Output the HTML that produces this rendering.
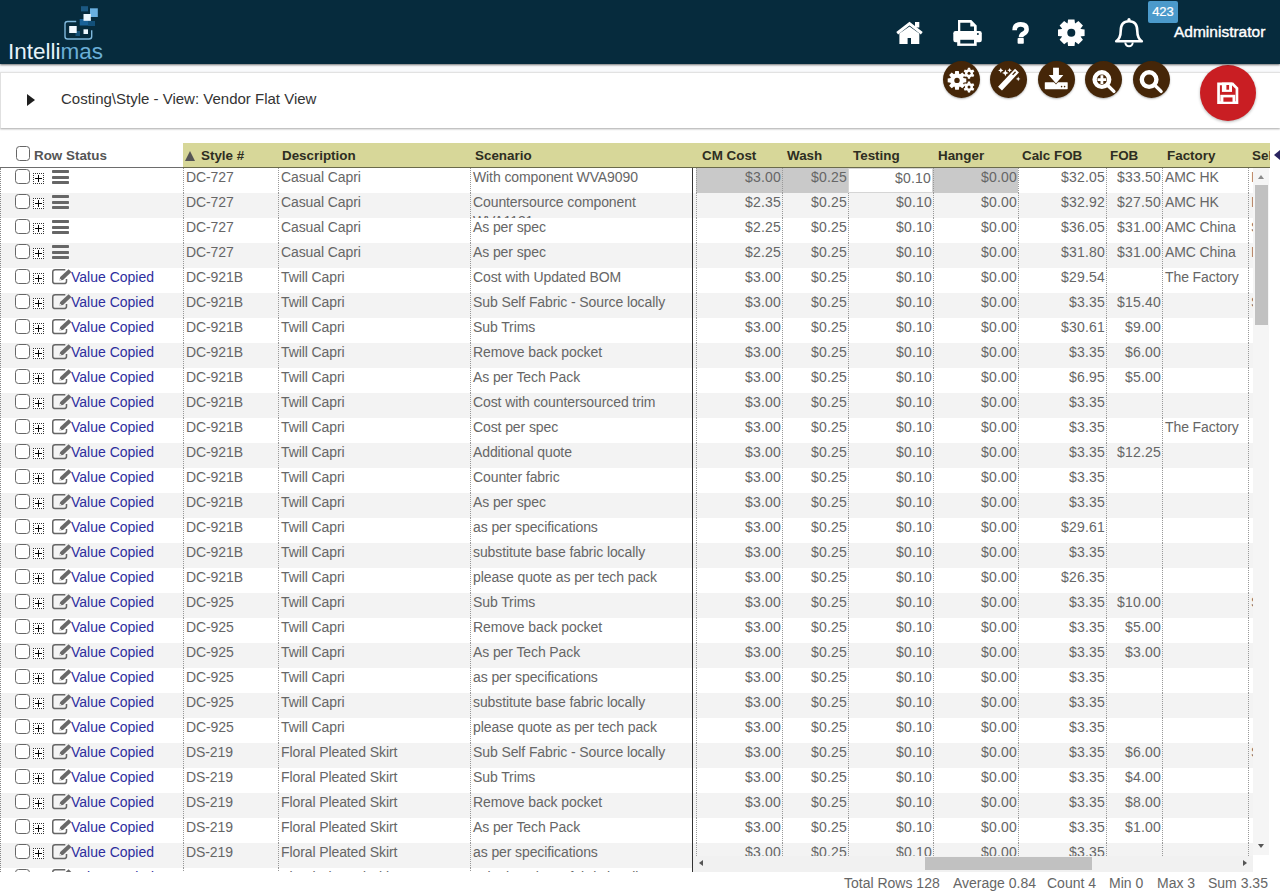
<!DOCTYPE html><html><head><meta charset="utf-8"><title>Intellimas</title><style>*{box-sizing:border-box}
html,body{margin:0;padding:0}
body{width:1280px;height:893px;overflow:hidden;position:relative;background:#fff;font-family:"Liberation Sans",sans-serif;color:#666}
#hdr{position:absolute;left:0;top:0;width:1280px;height:64px;background:#062b3d;box-shadow:0 1px 2px rgba(0,0,0,.55);z-index:1}
#gap{position:absolute;left:0;top:64px;width:1280px;height:8px;background:#f9fafc}
#panel{position:absolute;left:0;top:72px;width:1280px;height:56px;background:#fff;border-top:1px solid #e2e2e2;border-left:1px solid #e0e0e0;box-shadow:0 1px 2px rgba(0,0,0,.35)}
.crumb{position:absolute;left:61px;top:90px;font-size:15px;color:#333;line-height:18px}
.tri{position:absolute;left:27px;top:93.5px;width:0;height:0;border-left:8px solid #1e1e1e;border-top:6.8px solid transparent;border-bottom:6.8px solid transparent}
.btn{z-index:2;position:absolute;top:61px;width:37px;height:37px;border-radius:50%;background:#452608;box-shadow:0 1px 2px rgba(0,0,0,.3)}
.btn svg{position:absolute;left:0;top:0}
.save{position:absolute;left:1200px;top:65px;width:56px;height:56px;border-radius:50%;background:#c91e23;box-shadow:0 1px 3px rgba(0,0,0,.3)}
.admin{position:absolute;left:1174px;top:23px;font-size:15.5px;color:#fff;line-height:18px;-webkit-text-stroke:0.4px #fff}
.badge{position:absolute;left:1148px;top:1px;width:30px;height:22px;background:#4b9acb;border-radius:2px;color:#fff;font-size:13px;text-align:center;line-height:22px;-webkit-text-stroke:0.2px #fff}
#gh{position:absolute;left:0;top:143px;width:1280px;height:24px}
#gh .khaki{position:absolute;left:183px;top:0;width:1087px;height:25px;background:#d7d799;border-bottom:1px solid #6a6a4a}
#gh .hl{position:absolute;left:0;top:24px;width:183px;height:1px;background:#6d6d6d}
.hc{position:absolute;top:5px;font-size:13.4px;font-weight:bold;color:#2e2e22;line-height:16px;white-space:nowrap}
#gl{position:absolute;left:0;top:168px;width:693px;height:704px;overflow:hidden}
#gr{position:absolute;left:693px;top:168px;width:560px;height:688px;overflow:hidden}
.r{position:absolute;left:0;width:1400px;height:25px;background:#fff}
.r.alt{background:#f3f3f3}
.c{position:absolute;top:0;height:25px;padding:1px 1px 0 2px;font-size:14px;letter-spacing:-0.1px;line-height:17px;white-space:nowrap;overflow:hidden;border-left:1px dotted #999;color:#666}
.c.sc{white-space:normal;border-right:1px solid #333;padding-top:0;line-height:19px}
.c.n{text-align:right;padding-right:1px;letter-spacing:0.2px}
.c.gy{background:#c9c9c9}
.c.selc{background:#fff;border:1px solid #d5d5d5}
.cb{position:absolute;left:15px;top:1px;width:15px;height:15px;border:1.6px solid #666;border-radius:3.5px;background:#fff}
.pl{position:absolute;left:33px;top:5px;width:11px;height:11px;border:1px dotted #333;background:#fff}
.pl:before{content:"";position:absolute;left:1px;top:4px;width:7px;height:1px;background:#000}
.pl:after{content:"";position:absolute;left:4px;top:1px;width:1px;height:7px;background:#000}
.ham{position:absolute;left:52px;top:2px;width:17px;height:14px}
.ham i{display:block;height:3px;background:#666;margin-bottom:2.5px;border-radius:0.8px}
.ed{position:absolute;left:52px;top:1px;width:20px;height:16px}
.ed svg{display:block}
.vc{position:absolute;left:71px;top:1px;font-size:14px;line-height:17px;color:#2d2d9e;white-space:nowrap}
#gl .lb{position:absolute;left:0;top:0;width:1px;height:704px;border-left:1px dotted #888;z-index:5}
.vsb{position:absolute;left:1253px;top:168px;width:16px;height:687px;background:#f5f5f5}
.vthumb{position:absolute;left:2px;top:17px;width:13px;height:140px;background:#c1c1c1}
.ua{position:absolute;left:5px;top:7px;border-bottom:4px solid #8a8a8a;border-left:3.5px solid transparent;border-right:3.5px solid transparent}
.da{position:absolute;left:5px;top:676px;border-top:4px solid #555;border-left:3.5px solid transparent;border-right:3.5px solid transparent}
.la{position:absolute;left:6px;top:4px;border-right:4px solid #555;border-top:3.5px solid transparent;border-bottom:3.5px solid transparent}
.ra{position:absolute;left:550px;top:4px;border-left:4px solid #555;border-top:3.5px solid transparent;border-bottom:3.5px solid transparent}
.hsb{position:absolute;left:693px;top:856px;width:560px;height:16px;background:#f1f1f1}
.hthumb{position:absolute;left:232px;top:1px;width:167px;height:13px;background:#c1c1c1}
.foot{position:absolute;left:844px;top:875px;font-size:14px;color:#666;line-height:17px;white-space:nowrap;word-spacing:0}
</style></head><body><div id="hdr">
<svg width="110" height="64" style="position:absolute;left:0;top:0">
<rect x="81" y="6.2" width="7" height="5.2" fill="#1b5882"/>
<rect x="90" y="8.3" width="7.8" height="8.7" fill="#6ab0e0"/>
<rect x="79.7" y="19" width="11.3" height="6.5" fill="#1a6298"/>
<rect x="88" y="21" width="7" height="5" fill="#12507a"/>
<rect x="75.5" y="31" width="4.5" height="5" fill="#16527a"/>
<rect x="83.5" y="14" width="7.3" height="6.8" fill="#eef8ff"/>
<rect x="69.2" y="26" width="7.5" height="7" fill="#f4faff"/>
<rect x="83.5" y="29.3" width="4.5" height="4.7" fill="#eef8ff"/>
<path d="M76.2 21.5H67.5Q65 21.5 65 24V36.5Q65 39 67.5 39H89Q91.7 39 91.7 36.5V30.2" fill="none" stroke="#7fb8dc" stroke-width="1.4"/>
<text x="8" y="59" font-family="Liberation Sans" font-size="22.5" fill="#e6f3fa">Intelli<tspan fill="#6aaed6">mas</tspan></text>
</svg>
<svg width="400" height="64" style="position:absolute;left:880px;top:0" fill="#fff">
<!-- home -->
<path d="M17.2 33.2L29.5 23.6L41.8 33.2" fill="none" stroke="#fff" stroke-width="3"/>
<rect x="35" y="22" width="4.3" height="5.5"/>
<path d="M19.4 33.6L29.5 26.6L39.3 33.6V43.9H31V38H27.6V43.9H19.4Z"/>
<!-- print -->
<path d="M78 20H91.3L96.7 25.4V33H94V26.6H90.3V22.8H80.3V33H78Z"/>
<rect x="73.3" y="31" width="28.5" height="11.3" rx="2.2"/>
<path d="M77.2 40H96.7V45.9H77.2Z"/>
<rect x="80.3" y="39.8" width="13.7" height="3.7" fill="#062b3d"/>
<circle cx="97.9" cy="34.1" r="1" fill="#062b3d"/>
<!-- ? -->
<path d="M134.6 30.2Q134.6 24.4 140.6 24.4Q146.6 24.4 146.6 29.2Q146.6 32 143.6 33.6Q141 35 141 37.2" fill="none" stroke="#fff" stroke-width="4.6"/><rect x="137.6" y="38" width="6.2" height="5.7" rx="0.8"/>
<!-- gear -->
<g transform="translate(191.3,32.7)">
<path id="tooth" d="M-3.2 -13.3H3.2L3.9 -8H-3.9Z"/>
<use href="#tooth" transform="rotate(45)"/><use href="#tooth" transform="rotate(90)"/><use href="#tooth" transform="rotate(135)"/>
<use href="#tooth" transform="rotate(180)"/><use href="#tooth" transform="rotate(225)"/><use href="#tooth" transform="rotate(270)"/><use href="#tooth" transform="rotate(315)"/>
<circle r="10" fill="#fff"/>
<circle r="4" fill="#062b3d"/>
</g>
<!-- bell -->
<path d="M249 21.3C255.3 21.3 257.3 25.5 257.3 31C257.3 36.5 258.6 39 261.8 41.3H236.2C239.4 39 240.7 36.5 240.7 31C240.7 25.5 242.7 21.3 249 21.3Z" fill="none" stroke="#fff" stroke-width="2.6" stroke-linejoin="round"/>
<circle cx="249" cy="19.6" r="1.6"/>
<path d="M245.3 42.6A3.7 3.7 0 0 0 252.7 42.6" fill="none" stroke="#fff" stroke-width="2"/>
</svg>
<div class="badge">423</div>
<div class="admin">Administrator</div>
</div>
<div id="gap"></div>
<div id="panel"></div>
<div class="tri"></div>
<div class="crumb">Costing\Style - View: Vendor Flat View</div>
<div class="btn" style="left:943px"><svg width="37" height="37" fill="#fff">
<g transform="translate(14,19.4)"><path id="t1" d="M-1.8 -9.3H1.8L2.3 -6H-2.3Z"/><use href="#t1" transform="rotate(45)"/><use href="#t1" transform="rotate(90)"/><use href="#t1" transform="rotate(135)"/><use href="#t1" transform="rotate(180)"/><use href="#t1" transform="rotate(225)"/><use href="#t1" transform="rotate(270)"/><use href="#t1" transform="rotate(315)"/><circle r="6.8"/><circle r="2.7" fill="#452608"/></g>
<g transform="translate(26,12.3)"><path id="t2" d="M-1.1 -5.5H1.1L1.4 -3.5H-1.4Z"/><use href="#t2" transform="rotate(60)"/><use href="#t2" transform="rotate(120)"/><use href="#t2" transform="rotate(180)"/><use href="#t2" transform="rotate(240)"/><use href="#t2" transform="rotate(300)"/><circle r="4"/><circle r="1.5" fill="#452608"/></g>
<g transform="translate(26,26)"><use href="#t2"/><use href="#t2" transform="rotate(60)"/><use href="#t2" transform="rotate(120)"/><use href="#t2" transform="rotate(180)"/><use href="#t2" transform="rotate(240)"/><use href="#t2" transform="rotate(300)"/><circle r="4"/><circle r="1.5" fill="#452608"/></g>
</svg></div>
<div class="btn" style="left:990px"><svg width="37" height="37" fill="#fff">
<path d="M10 27.6L27 9.6" stroke="#fff" stroke-width="5.4"/>
<path d="M22.6 13.9L25.6 10.8" stroke="#452608" stroke-width="1.3"/>
<path d="M10.8 6.8l.8 1.8 1.8.8-1.8.8-.8 1.8-.8-1.8-1.8-.8 1.8-.8z"/>
<path d="M15.4 8.6l1 2.3 2.3 1-2.3 1-1 2.3-1-2.3-2.3-1 2.3-1z"/>
<path d="M19.6 6.9l.7 1.6 1.6.7-1.6.7-.7 1.6-.7-1.6-1.6-.7 1.6-.7z"/>
<path d="M28.2 15.6l.7 1.6 1.6.7-1.6.7-.7 1.6-.7-1.6-1.6-.7 1.6-.7z"/>
</svg></div>
<div class="btn" style="left:1038px"><svg width="37" height="37" fill="#fff">
<rect x="6.8" y="21.2" width="22.9" height="7" rx="0.6"/>
<path d="M15.1 6.8H20.9V14.1H25.3L18 22.4L10.7 14.1H15.1Z" stroke="#452608" stroke-width="1.3" stroke-linejoin="miter"/>
<path d="M15.1 6.8H20.9V14.1H25.3L18 22.4L10.7 14.1H15.1Z"/>
<circle cx="23.6" cy="25.6" r=".8" fill="#452608"/><circle cx="26.6" cy="25.6" r=".8" fill="#452608"/>
</svg></div>
<div class="btn" style="left:1085px"><svg width="37" height="37">
<circle cx="16.9" cy="18.6" r="7.3" fill="none" stroke="#fff" stroke-width="4.4"/>
<path d="M22.6 24.3L28.9 30.4" stroke="#fff" stroke-width="3.4" stroke-linecap="round"/>
<path d="M16.9 14.2V23M12.5 18.6H21.3" stroke="#fff" stroke-width="2.8"/>
</svg></div>
<div class="btn" style="left:1133px"><svg width="37" height="37">
<circle cx="16.1" cy="18.6" r="7.3" fill="none" stroke="#fff" stroke-width="4.4"/>
<path d="M21.8 24.3L28.1 30.4" stroke="#fff" stroke-width="3.4" stroke-linecap="round"/>
</svg></div>
<div class="save"><svg width="56" height="56">
<path d="M18.55 18.95H32.6L36.95 23.3V37.65H18.55Z" fill="none" stroke="#fff" stroke-width="2.7"/>
<rect x="21.9" y="17.6" width="10.1" height="9.3" fill="#fff"/>
<rect x="26.4" y="20" width="2.7" height="4.7" fill="#c91e23"/>
<rect x="20.3" y="29.8" width="14.9" height="7.7" fill="#fff"/>
<rect x="23.4" y="32.4" width="9.1" height="4.3" fill="#c91e23"/>
</svg></div>
<div id="gh">
<div class="hl"></div>
<div class="khaki"></div>
<span style="position:absolute;left:15.5px;top:3px;width:14.5px;height:14.5px;border:1.6px solid #666;border-radius:3.5px;background:#fff"></span>
<span class="hc" style="left:34px;color:#555">Row Status</span>
<span style="position:absolute;left:185px;top:8px;width:0;height:0;border-bottom:10px solid #555;border-left:5px solid transparent;border-right:5px solid transparent"></span>
<span class="hc" style="left:201px">Style #</span>
<span class="hc" style="left:282px">Description</span>
<span class="hc" style="left:475px">Scenario</span>
<span class="hc" style="left:702px">CM Cost</span>
<span class="hc" style="left:787px">Wash</span>
<span class="hc" style="left:853px">Testing</span>
<span class="hc" style="left:938px">Hanger</span>
<span class="hc" style="left:1022px">Calc FOB</span>
<span class="hc" style="left:1110px">FOB</span>
<span class="hc" style="left:1167px">Factory</span>
<span class="hc" style="left:1252px;width:18px;overflow:hidden">Sel</span>
<span style="position:absolute;left:1274px;top:7px;width:0;height:0;border-right:6px solid #2a2460;border-top:5px solid transparent;border-bottom:5px solid transparent"></span>
</div>
<div id="gl"><div class="lb"></div><div class="r" style="top:0px"><span class="cb"></span><span class="pl"></span><span class="ham"><i></i><i></i><i></i></span><span class="c" style="left:183px;width:95px">DC-727</span><span class="c" style="left:278px;width:193px">Casual Capri</span><span class="c sc" style="left:470px;width:223px">With component WVA9090</span></div><div class="r alt" style="top:25px"><span class="cb"></span><span class="pl"></span><span class="ham"><i></i><i></i><i></i></span><span class="c" style="left:183px;width:95px">DC-727</span><span class="c" style="left:278px;width:193px">Casual Capri</span><span class="c sc" style="left:470px;width:223px">Countersource component WVA1131</span></div><div class="r" style="top:50px"><span class="cb"></span><span class="pl"></span><span class="ham"><i></i><i></i><i></i></span><span class="c" style="left:183px;width:95px">DC-727</span><span class="c" style="left:278px;width:193px">Casual Capri</span><span class="c sc" style="left:470px;width:223px">As per spec</span></div><div class="r alt" style="top:75px"><span class="cb"></span><span class="pl"></span><span class="ham"><i></i><i></i><i></i></span><span class="c" style="left:183px;width:95px">DC-727</span><span class="c" style="left:278px;width:193px">Casual Capri</span><span class="c sc" style="left:470px;width:223px">As per spec</span></div><div class="r" style="top:100px"><span class="cb"></span><span class="pl"></span><span class="ed"><svg width="20" height="16" viewBox="0 0 20 16"><path d="M13.3 0.75H3.2Q0.75 0.75 0.75 3.2V12.2Q0.75 14.6 3.2 14.6H12.1Q14.5 14.6 14.5 12.2V10" fill="none" stroke="#666" stroke-width="1.5"/><path d="M7.2 11.6L8.2 8L16.6 0.3L19.4 3.1L11 10.9Z" fill="#6a6a6a"/><path d="M7.2 11.6L7.8 9.4L9.6 11Z" fill="#fff"/></svg></span><span class="vc">Value Copied</span><span class="c" style="left:183px;width:95px">DC-921B</span><span class="c" style="left:278px;width:193px">Twill Capri</span><span class="c sc" style="left:470px;width:223px">Cost with Updated BOM</span></div><div class="r alt" style="top:125px"><span class="cb"></span><span class="pl"></span><span class="ed"><svg width="20" height="16" viewBox="0 0 20 16"><path d="M13.3 0.75H3.2Q0.75 0.75 0.75 3.2V12.2Q0.75 14.6 3.2 14.6H12.1Q14.5 14.6 14.5 12.2V10" fill="none" stroke="#666" stroke-width="1.5"/><path d="M7.2 11.6L8.2 8L16.6 0.3L19.4 3.1L11 10.9Z" fill="#6a6a6a"/><path d="M7.2 11.6L7.8 9.4L9.6 11Z" fill="#fff"/></svg></span><span class="vc">Value Copied</span><span class="c" style="left:183px;width:95px">DC-921B</span><span class="c" style="left:278px;width:193px">Twill Capri</span><span class="c sc" style="left:470px;width:223px">Sub Self Fabric - Source locally</span></div><div class="r" style="top:150px"><span class="cb"></span><span class="pl"></span><span class="ed"><svg width="20" height="16" viewBox="0 0 20 16"><path d="M13.3 0.75H3.2Q0.75 0.75 0.75 3.2V12.2Q0.75 14.6 3.2 14.6H12.1Q14.5 14.6 14.5 12.2V10" fill="none" stroke="#666" stroke-width="1.5"/><path d="M7.2 11.6L8.2 8L16.6 0.3L19.4 3.1L11 10.9Z" fill="#6a6a6a"/><path d="M7.2 11.6L7.8 9.4L9.6 11Z" fill="#fff"/></svg></span><span class="vc">Value Copied</span><span class="c" style="left:183px;width:95px">DC-921B</span><span class="c" style="left:278px;width:193px">Twill Capri</span><span class="c sc" style="left:470px;width:223px">Sub Trims</span></div><div class="r alt" style="top:175px"><span class="cb"></span><span class="pl"></span><span class="ed"><svg width="20" height="16" viewBox="0 0 20 16"><path d="M13.3 0.75H3.2Q0.75 0.75 0.75 3.2V12.2Q0.75 14.6 3.2 14.6H12.1Q14.5 14.6 14.5 12.2V10" fill="none" stroke="#666" stroke-width="1.5"/><path d="M7.2 11.6L8.2 8L16.6 0.3L19.4 3.1L11 10.9Z" fill="#6a6a6a"/><path d="M7.2 11.6L7.8 9.4L9.6 11Z" fill="#fff"/></svg></span><span class="vc">Value Copied</span><span class="c" style="left:183px;width:95px">DC-921B</span><span class="c" style="left:278px;width:193px">Twill Capri</span><span class="c sc" style="left:470px;width:223px">Remove back pocket</span></div><div class="r" style="top:200px"><span class="cb"></span><span class="pl"></span><span class="ed"><svg width="20" height="16" viewBox="0 0 20 16"><path d="M13.3 0.75H3.2Q0.75 0.75 0.75 3.2V12.2Q0.75 14.6 3.2 14.6H12.1Q14.5 14.6 14.5 12.2V10" fill="none" stroke="#666" stroke-width="1.5"/><path d="M7.2 11.6L8.2 8L16.6 0.3L19.4 3.1L11 10.9Z" fill="#6a6a6a"/><path d="M7.2 11.6L7.8 9.4L9.6 11Z" fill="#fff"/></svg></span><span class="vc">Value Copied</span><span class="c" style="left:183px;width:95px">DC-921B</span><span class="c" style="left:278px;width:193px">Twill Capri</span><span class="c sc" style="left:470px;width:223px">As per Tech Pack</span></div><div class="r alt" style="top:225px"><span class="cb"></span><span class="pl"></span><span class="ed"><svg width="20" height="16" viewBox="0 0 20 16"><path d="M13.3 0.75H3.2Q0.75 0.75 0.75 3.2V12.2Q0.75 14.6 3.2 14.6H12.1Q14.5 14.6 14.5 12.2V10" fill="none" stroke="#666" stroke-width="1.5"/><path d="M7.2 11.6L8.2 8L16.6 0.3L19.4 3.1L11 10.9Z" fill="#6a6a6a"/><path d="M7.2 11.6L7.8 9.4L9.6 11Z" fill="#fff"/></svg></span><span class="vc">Value Copied</span><span class="c" style="left:183px;width:95px">DC-921B</span><span class="c" style="left:278px;width:193px">Twill Capri</span><span class="c sc" style="left:470px;width:223px">Cost with countersourced trim</span></div><div class="r" style="top:250px"><span class="cb"></span><span class="pl"></span><span class="ed"><svg width="20" height="16" viewBox="0 0 20 16"><path d="M13.3 0.75H3.2Q0.75 0.75 0.75 3.2V12.2Q0.75 14.6 3.2 14.6H12.1Q14.5 14.6 14.5 12.2V10" fill="none" stroke="#666" stroke-width="1.5"/><path d="M7.2 11.6L8.2 8L16.6 0.3L19.4 3.1L11 10.9Z" fill="#6a6a6a"/><path d="M7.2 11.6L7.8 9.4L9.6 11Z" fill="#fff"/></svg></span><span class="vc">Value Copied</span><span class="c" style="left:183px;width:95px">DC-921B</span><span class="c" style="left:278px;width:193px">Twill Capri</span><span class="c sc" style="left:470px;width:223px">Cost per spec</span></div><div class="r alt" style="top:275px"><span class="cb"></span><span class="pl"></span><span class="ed"><svg width="20" height="16" viewBox="0 0 20 16"><path d="M13.3 0.75H3.2Q0.75 0.75 0.75 3.2V12.2Q0.75 14.6 3.2 14.6H12.1Q14.5 14.6 14.5 12.2V10" fill="none" stroke="#666" stroke-width="1.5"/><path d="M7.2 11.6L8.2 8L16.6 0.3L19.4 3.1L11 10.9Z" fill="#6a6a6a"/><path d="M7.2 11.6L7.8 9.4L9.6 11Z" fill="#fff"/></svg></span><span class="vc">Value Copied</span><span class="c" style="left:183px;width:95px">DC-921B</span><span class="c" style="left:278px;width:193px">Twill Capri</span><span class="c sc" style="left:470px;width:223px">Additional quote</span></div><div class="r" style="top:300px"><span class="cb"></span><span class="pl"></span><span class="ed"><svg width="20" height="16" viewBox="0 0 20 16"><path d="M13.3 0.75H3.2Q0.75 0.75 0.75 3.2V12.2Q0.75 14.6 3.2 14.6H12.1Q14.5 14.6 14.5 12.2V10" fill="none" stroke="#666" stroke-width="1.5"/><path d="M7.2 11.6L8.2 8L16.6 0.3L19.4 3.1L11 10.9Z" fill="#6a6a6a"/><path d="M7.2 11.6L7.8 9.4L9.6 11Z" fill="#fff"/></svg></span><span class="vc">Value Copied</span><span class="c" style="left:183px;width:95px">DC-921B</span><span class="c" style="left:278px;width:193px">Twill Capri</span><span class="c sc" style="left:470px;width:223px">Counter fabric</span></div><div class="r alt" style="top:325px"><span class="cb"></span><span class="pl"></span><span class="ed"><svg width="20" height="16" viewBox="0 0 20 16"><path d="M13.3 0.75H3.2Q0.75 0.75 0.75 3.2V12.2Q0.75 14.6 3.2 14.6H12.1Q14.5 14.6 14.5 12.2V10" fill="none" stroke="#666" stroke-width="1.5"/><path d="M7.2 11.6L8.2 8L16.6 0.3L19.4 3.1L11 10.9Z" fill="#6a6a6a"/><path d="M7.2 11.6L7.8 9.4L9.6 11Z" fill="#fff"/></svg></span><span class="vc">Value Copied</span><span class="c" style="left:183px;width:95px">DC-921B</span><span class="c" style="left:278px;width:193px">Twill Capri</span><span class="c sc" style="left:470px;width:223px">As per spec</span></div><div class="r" style="top:350px"><span class="cb"></span><span class="pl"></span><span class="ed"><svg width="20" height="16" viewBox="0 0 20 16"><path d="M13.3 0.75H3.2Q0.75 0.75 0.75 3.2V12.2Q0.75 14.6 3.2 14.6H12.1Q14.5 14.6 14.5 12.2V10" fill="none" stroke="#666" stroke-width="1.5"/><path d="M7.2 11.6L8.2 8L16.6 0.3L19.4 3.1L11 10.9Z" fill="#6a6a6a"/><path d="M7.2 11.6L7.8 9.4L9.6 11Z" fill="#fff"/></svg></span><span class="vc">Value Copied</span><span class="c" style="left:183px;width:95px">DC-921B</span><span class="c" style="left:278px;width:193px">Twill Capri</span><span class="c sc" style="left:470px;width:223px">as per specifications</span></div><div class="r alt" style="top:375px"><span class="cb"></span><span class="pl"></span><span class="ed"><svg width="20" height="16" viewBox="0 0 20 16"><path d="M13.3 0.75H3.2Q0.75 0.75 0.75 3.2V12.2Q0.75 14.6 3.2 14.6H12.1Q14.5 14.6 14.5 12.2V10" fill="none" stroke="#666" stroke-width="1.5"/><path d="M7.2 11.6L8.2 8L16.6 0.3L19.4 3.1L11 10.9Z" fill="#6a6a6a"/><path d="M7.2 11.6L7.8 9.4L9.6 11Z" fill="#fff"/></svg></span><span class="vc">Value Copied</span><span class="c" style="left:183px;width:95px">DC-921B</span><span class="c" style="left:278px;width:193px">Twill Capri</span><span class="c sc" style="left:470px;width:223px">substitute base fabric locally</span></div><div class="r" style="top:400px"><span class="cb"></span><span class="pl"></span><span class="ed"><svg width="20" height="16" viewBox="0 0 20 16"><path d="M13.3 0.75H3.2Q0.75 0.75 0.75 3.2V12.2Q0.75 14.6 3.2 14.6H12.1Q14.5 14.6 14.5 12.2V10" fill="none" stroke="#666" stroke-width="1.5"/><path d="M7.2 11.6L8.2 8L16.6 0.3L19.4 3.1L11 10.9Z" fill="#6a6a6a"/><path d="M7.2 11.6L7.8 9.4L9.6 11Z" fill="#fff"/></svg></span><span class="vc">Value Copied</span><span class="c" style="left:183px;width:95px">DC-921B</span><span class="c" style="left:278px;width:193px">Twill Capri</span><span class="c sc" style="left:470px;width:223px">please quote as per tech pack</span></div><div class="r alt" style="top:425px"><span class="cb"></span><span class="pl"></span><span class="ed"><svg width="20" height="16" viewBox="0 0 20 16"><path d="M13.3 0.75H3.2Q0.75 0.75 0.75 3.2V12.2Q0.75 14.6 3.2 14.6H12.1Q14.5 14.6 14.5 12.2V10" fill="none" stroke="#666" stroke-width="1.5"/><path d="M7.2 11.6L8.2 8L16.6 0.3L19.4 3.1L11 10.9Z" fill="#6a6a6a"/><path d="M7.2 11.6L7.8 9.4L9.6 11Z" fill="#fff"/></svg></span><span class="vc">Value Copied</span><span class="c" style="left:183px;width:95px">DC-925</span><span class="c" style="left:278px;width:193px">Twill Capri</span><span class="c sc" style="left:470px;width:223px">Sub Trims</span></div><div class="r" style="top:450px"><span class="cb"></span><span class="pl"></span><span class="ed"><svg width="20" height="16" viewBox="0 0 20 16"><path d="M13.3 0.75H3.2Q0.75 0.75 0.75 3.2V12.2Q0.75 14.6 3.2 14.6H12.1Q14.5 14.6 14.5 12.2V10" fill="none" stroke="#666" stroke-width="1.5"/><path d="M7.2 11.6L8.2 8L16.6 0.3L19.4 3.1L11 10.9Z" fill="#6a6a6a"/><path d="M7.2 11.6L7.8 9.4L9.6 11Z" fill="#fff"/></svg></span><span class="vc">Value Copied</span><span class="c" style="left:183px;width:95px">DC-925</span><span class="c" style="left:278px;width:193px">Twill Capri</span><span class="c sc" style="left:470px;width:223px">Remove back pocket</span></div><div class="r alt" style="top:475px"><span class="cb"></span><span class="pl"></span><span class="ed"><svg width="20" height="16" viewBox="0 0 20 16"><path d="M13.3 0.75H3.2Q0.75 0.75 0.75 3.2V12.2Q0.75 14.6 3.2 14.6H12.1Q14.5 14.6 14.5 12.2V10" fill="none" stroke="#666" stroke-width="1.5"/><path d="M7.2 11.6L8.2 8L16.6 0.3L19.4 3.1L11 10.9Z" fill="#6a6a6a"/><path d="M7.2 11.6L7.8 9.4L9.6 11Z" fill="#fff"/></svg></span><span class="vc">Value Copied</span><span class="c" style="left:183px;width:95px">DC-925</span><span class="c" style="left:278px;width:193px">Twill Capri</span><span class="c sc" style="left:470px;width:223px">As per Tech Pack</span></div><div class="r" style="top:500px"><span class="cb"></span><span class="pl"></span><span class="ed"><svg width="20" height="16" viewBox="0 0 20 16"><path d="M13.3 0.75H3.2Q0.75 0.75 0.75 3.2V12.2Q0.75 14.6 3.2 14.6H12.1Q14.5 14.6 14.5 12.2V10" fill="none" stroke="#666" stroke-width="1.5"/><path d="M7.2 11.6L8.2 8L16.6 0.3L19.4 3.1L11 10.9Z" fill="#6a6a6a"/><path d="M7.2 11.6L7.8 9.4L9.6 11Z" fill="#fff"/></svg></span><span class="vc">Value Copied</span><span class="c" style="left:183px;width:95px">DC-925</span><span class="c" style="left:278px;width:193px">Twill Capri</span><span class="c sc" style="left:470px;width:223px">as per specifications</span></div><div class="r alt" style="top:525px"><span class="cb"></span><span class="pl"></span><span class="ed"><svg width="20" height="16" viewBox="0 0 20 16"><path d="M13.3 0.75H3.2Q0.75 0.75 0.75 3.2V12.2Q0.75 14.6 3.2 14.6H12.1Q14.5 14.6 14.5 12.2V10" fill="none" stroke="#666" stroke-width="1.5"/><path d="M7.2 11.6L8.2 8L16.6 0.3L19.4 3.1L11 10.9Z" fill="#6a6a6a"/><path d="M7.2 11.6L7.8 9.4L9.6 11Z" fill="#fff"/></svg></span><span class="vc">Value Copied</span><span class="c" style="left:183px;width:95px">DC-925</span><span class="c" style="left:278px;width:193px">Twill Capri</span><span class="c sc" style="left:470px;width:223px">substitute base fabric locally</span></div><div class="r" style="top:550px"><span class="cb"></span><span class="pl"></span><span class="ed"><svg width="20" height="16" viewBox="0 0 20 16"><path d="M13.3 0.75H3.2Q0.75 0.75 0.75 3.2V12.2Q0.75 14.6 3.2 14.6H12.1Q14.5 14.6 14.5 12.2V10" fill="none" stroke="#666" stroke-width="1.5"/><path d="M7.2 11.6L8.2 8L16.6 0.3L19.4 3.1L11 10.9Z" fill="#6a6a6a"/><path d="M7.2 11.6L7.8 9.4L9.6 11Z" fill="#fff"/></svg></span><span class="vc">Value Copied</span><span class="c" style="left:183px;width:95px">DC-925</span><span class="c" style="left:278px;width:193px">Twill Capri</span><span class="c sc" style="left:470px;width:223px">please quote as per tech pack</span></div><div class="r alt" style="top:575px"><span class="cb"></span><span class="pl"></span><span class="ed"><svg width="20" height="16" viewBox="0 0 20 16"><path d="M13.3 0.75H3.2Q0.75 0.75 0.75 3.2V12.2Q0.75 14.6 3.2 14.6H12.1Q14.5 14.6 14.5 12.2V10" fill="none" stroke="#666" stroke-width="1.5"/><path d="M7.2 11.6L8.2 8L16.6 0.3L19.4 3.1L11 10.9Z" fill="#6a6a6a"/><path d="M7.2 11.6L7.8 9.4L9.6 11Z" fill="#fff"/></svg></span><span class="vc">Value Copied</span><span class="c" style="left:183px;width:95px">DS-219</span><span class="c" style="left:278px;width:193px">Floral Pleated Skirt</span><span class="c sc" style="left:470px;width:223px">Sub Self Fabric - Source locally</span></div><div class="r" style="top:600px"><span class="cb"></span><span class="pl"></span><span class="ed"><svg width="20" height="16" viewBox="0 0 20 16"><path d="M13.3 0.75H3.2Q0.75 0.75 0.75 3.2V12.2Q0.75 14.6 3.2 14.6H12.1Q14.5 14.6 14.5 12.2V10" fill="none" stroke="#666" stroke-width="1.5"/><path d="M7.2 11.6L8.2 8L16.6 0.3L19.4 3.1L11 10.9Z" fill="#6a6a6a"/><path d="M7.2 11.6L7.8 9.4L9.6 11Z" fill="#fff"/></svg></span><span class="vc">Value Copied</span><span class="c" style="left:183px;width:95px">DS-219</span><span class="c" style="left:278px;width:193px">Floral Pleated Skirt</span><span class="c sc" style="left:470px;width:223px">Sub Trims</span></div><div class="r alt" style="top:625px"><span class="cb"></span><span class="pl"></span><span class="ed"><svg width="20" height="16" viewBox="0 0 20 16"><path d="M13.3 0.75H3.2Q0.75 0.75 0.75 3.2V12.2Q0.75 14.6 3.2 14.6H12.1Q14.5 14.6 14.5 12.2V10" fill="none" stroke="#666" stroke-width="1.5"/><path d="M7.2 11.6L8.2 8L16.6 0.3L19.4 3.1L11 10.9Z" fill="#6a6a6a"/><path d="M7.2 11.6L7.8 9.4L9.6 11Z" fill="#fff"/></svg></span><span class="vc">Value Copied</span><span class="c" style="left:183px;width:95px">DS-219</span><span class="c" style="left:278px;width:193px">Floral Pleated Skirt</span><span class="c sc" style="left:470px;width:223px">Remove back pocket</span></div><div class="r" style="top:650px"><span class="cb"></span><span class="pl"></span><span class="ed"><svg width="20" height="16" viewBox="0 0 20 16"><path d="M13.3 0.75H3.2Q0.75 0.75 0.75 3.2V12.2Q0.75 14.6 3.2 14.6H12.1Q14.5 14.6 14.5 12.2V10" fill="none" stroke="#666" stroke-width="1.5"/><path d="M7.2 11.6L8.2 8L16.6 0.3L19.4 3.1L11 10.9Z" fill="#6a6a6a"/><path d="M7.2 11.6L7.8 9.4L9.6 11Z" fill="#fff"/></svg></span><span class="vc">Value Copied</span><span class="c" style="left:183px;width:95px">DS-219</span><span class="c" style="left:278px;width:193px">Floral Pleated Skirt</span><span class="c sc" style="left:470px;width:223px">As per Tech Pack</span></div><div class="r alt" style="top:675px"><span class="cb"></span><span class="pl"></span><span class="ed"><svg width="20" height="16" viewBox="0 0 20 16"><path d="M13.3 0.75H3.2Q0.75 0.75 0.75 3.2V12.2Q0.75 14.6 3.2 14.6H12.1Q14.5 14.6 14.5 12.2V10" fill="none" stroke="#666" stroke-width="1.5"/><path d="M7.2 11.6L8.2 8L16.6 0.3L19.4 3.1L11 10.9Z" fill="#6a6a6a"/><path d="M7.2 11.6L7.8 9.4L9.6 11Z" fill="#fff"/></svg></span><span class="vc">Value Copied</span><span class="c" style="left:183px;width:95px">DS-219</span><span class="c" style="left:278px;width:193px">Floral Pleated Skirt</span><span class="c sc" style="left:470px;width:223px">as per specifications</span></div><div class="r" style="top:700px"><span class="cb"></span><span class="pl"></span><span class="ed"><svg width="20" height="16" viewBox="0 0 20 16"><path d="M13.3 0.75H3.2Q0.75 0.75 0.75 3.2V12.2Q0.75 14.6 3.2 14.6H12.1Q14.5 14.6 14.5 12.2V10" fill="none" stroke="#666" stroke-width="1.5"/><path d="M7.2 11.6L8.2 8L16.6 0.3L19.4 3.1L11 10.9Z" fill="#6a6a6a"/><path d="M7.2 11.6L7.8 9.4L9.6 11Z" fill="#fff"/></svg></span><span class="vc">Value Copied</span><span class="c" style="left:183px;width:95px">DS-219</span><span class="c" style="left:278px;width:193px">Floral Pleated Skirt</span><span class="c sc" style="left:470px;width:223px">substitute base fabric locally</span></div></div><div id="gr"><div class="r" style="top:0px"><span class="c n gy" style="left:3px;width:86px">$3.00</span><span class="c n gy" style="left:89px;width:66px">$0.25</span><span class="c n selc" style="left:155px;width:85px">$0.10</span><span class="c n gy" style="left:240px;width:85px">$0.00</span><span class="c n" style="left:325px;width:88px">$32.05</span><span class="c n" style="left:413px;width:56px">$33.50</span><span class="c" style="left:469px;width:86px">AMC HK</span><span class="c" style="left:555px;width:52px">I</span></div><div class="r alt" style="top:25px"><span class="c n" style="left:3px;width:86px">$2.35</span><span class="c n" style="left:89px;width:66px">$0.25</span><span class="c n" style="left:155px;width:85px">$0.10</span><span class="c n" style="left:240px;width:85px">$0.00</span><span class="c n" style="left:325px;width:88px">$32.92</span><span class="c n" style="left:413px;width:56px">$27.50</span><span class="c" style="left:469px;width:86px">AMC HK</span><span class="c" style="left:555px;width:52px">I</span></div><div class="r" style="top:50px"><span class="c n" style="left:3px;width:86px">$2.25</span><span class="c n" style="left:89px;width:66px">$0.25</span><span class="c n" style="left:155px;width:85px">$0.10</span><span class="c n" style="left:240px;width:85px">$0.00</span><span class="c n" style="left:325px;width:88px">$36.05</span><span class="c n" style="left:413px;width:56px">$31.00</span><span class="c" style="left:469px;width:86px">AMC China</span><span class="c" style="left:555px;width:52px">S</span></div><div class="r alt" style="top:75px"><span class="c n" style="left:3px;width:86px">$2.25</span><span class="c n" style="left:89px;width:66px">$0.25</span><span class="c n" style="left:155px;width:85px">$0.10</span><span class="c n" style="left:240px;width:85px">$0.00</span><span class="c n" style="left:325px;width:88px">$31.80</span><span class="c n" style="left:413px;width:56px">$31.00</span><span class="c" style="left:469px;width:86px">AMC China</span><span class="c" style="left:555px;width:52px">I</span></div><div class="r" style="top:100px"><span class="c n" style="left:3px;width:86px">$3.00</span><span class="c n" style="left:89px;width:66px">$0.25</span><span class="c n" style="left:155px;width:85px">$0.10</span><span class="c n" style="left:240px;width:85px">$0.00</span><span class="c n" style="left:325px;width:88px">$29.54</span><span class="c n" style="left:413px;width:56px"></span><span class="c" style="left:469px;width:86px">The Factory</span><span class="c" style="left:555px;width:52px"></span></div><div class="r alt" style="top:125px"><span class="c n" style="left:3px;width:86px">$3.00</span><span class="c n" style="left:89px;width:66px">$0.25</span><span class="c n" style="left:155px;width:85px">$0.10</span><span class="c n" style="left:240px;width:85px">$0.00</span><span class="c n" style="left:325px;width:88px">$3.35</span><span class="c n" style="left:413px;width:56px">$15.40</span><span class="c" style="left:469px;width:86px"></span><span class="c" style="left:555px;width:52px">S</span></div><div class="r" style="top:150px"><span class="c n" style="left:3px;width:86px">$3.00</span><span class="c n" style="left:89px;width:66px">$0.25</span><span class="c n" style="left:155px;width:85px">$0.10</span><span class="c n" style="left:240px;width:85px">$0.00</span><span class="c n" style="left:325px;width:88px">$30.61</span><span class="c n" style="left:413px;width:56px">$9.00</span><span class="c" style="left:469px;width:86px"></span><span class="c" style="left:555px;width:52px"></span></div><div class="r alt" style="top:175px"><span class="c n" style="left:3px;width:86px">$3.00</span><span class="c n" style="left:89px;width:66px">$0.25</span><span class="c n" style="left:155px;width:85px">$0.10</span><span class="c n" style="left:240px;width:85px">$0.00</span><span class="c n" style="left:325px;width:88px">$3.35</span><span class="c n" style="left:413px;width:56px">$6.00</span><span class="c" style="left:469px;width:86px"></span><span class="c" style="left:555px;width:52px"></span></div><div class="r" style="top:200px"><span class="c n" style="left:3px;width:86px">$3.00</span><span class="c n" style="left:89px;width:66px">$0.25</span><span class="c n" style="left:155px;width:85px">$0.10</span><span class="c n" style="left:240px;width:85px">$0.00</span><span class="c n" style="left:325px;width:88px">$6.95</span><span class="c n" style="left:413px;width:56px">$5.00</span><span class="c" style="left:469px;width:86px"></span><span class="c" style="left:555px;width:52px"></span></div><div class="r alt" style="top:225px"><span class="c n" style="left:3px;width:86px">$3.00</span><span class="c n" style="left:89px;width:66px">$0.25</span><span class="c n" style="left:155px;width:85px">$0.10</span><span class="c n" style="left:240px;width:85px">$0.00</span><span class="c n" style="left:325px;width:88px">$3.35</span><span class="c n" style="left:413px;width:56px"></span><span class="c" style="left:469px;width:86px"></span><span class="c" style="left:555px;width:52px"></span></div><div class="r" style="top:250px"><span class="c n" style="left:3px;width:86px">$3.00</span><span class="c n" style="left:89px;width:66px">$0.25</span><span class="c n" style="left:155px;width:85px">$0.10</span><span class="c n" style="left:240px;width:85px">$0.00</span><span class="c n" style="left:325px;width:88px">$3.35</span><span class="c n" style="left:413px;width:56px"></span><span class="c" style="left:469px;width:86px">The Factory</span><span class="c" style="left:555px;width:52px"></span></div><div class="r alt" style="top:275px"><span class="c n" style="left:3px;width:86px">$3.00</span><span class="c n" style="left:89px;width:66px">$0.25</span><span class="c n" style="left:155px;width:85px">$0.10</span><span class="c n" style="left:240px;width:85px">$0.00</span><span class="c n" style="left:325px;width:88px">$3.35</span><span class="c n" style="left:413px;width:56px">$12.25</span><span class="c" style="left:469px;width:86px"></span><span class="c" style="left:555px;width:52px"></span></div><div class="r" style="top:300px"><span class="c n" style="left:3px;width:86px">$3.00</span><span class="c n" style="left:89px;width:66px">$0.25</span><span class="c n" style="left:155px;width:85px">$0.10</span><span class="c n" style="left:240px;width:85px">$0.00</span><span class="c n" style="left:325px;width:88px">$3.35</span><span class="c n" style="left:413px;width:56px"></span><span class="c" style="left:469px;width:86px"></span><span class="c" style="left:555px;width:52px"></span></div><div class="r alt" style="top:325px"><span class="c n" style="left:3px;width:86px">$3.00</span><span class="c n" style="left:89px;width:66px">$0.25</span><span class="c n" style="left:155px;width:85px">$0.10</span><span class="c n" style="left:240px;width:85px">$0.00</span><span class="c n" style="left:325px;width:88px">$3.35</span><span class="c n" style="left:413px;width:56px"></span><span class="c" style="left:469px;width:86px"></span><span class="c" style="left:555px;width:52px"></span></div><div class="r" style="top:350px"><span class="c n" style="left:3px;width:86px">$3.00</span><span class="c n" style="left:89px;width:66px">$0.25</span><span class="c n" style="left:155px;width:85px">$0.10</span><span class="c n" style="left:240px;width:85px">$0.00</span><span class="c n" style="left:325px;width:88px">$29.61</span><span class="c n" style="left:413px;width:56px"></span><span class="c" style="left:469px;width:86px"></span><span class="c" style="left:555px;width:52px"></span></div><div class="r alt" style="top:375px"><span class="c n" style="left:3px;width:86px">$3.00</span><span class="c n" style="left:89px;width:66px">$0.25</span><span class="c n" style="left:155px;width:85px">$0.10</span><span class="c n" style="left:240px;width:85px">$0.00</span><span class="c n" style="left:325px;width:88px">$3.35</span><span class="c n" style="left:413px;width:56px"></span><span class="c" style="left:469px;width:86px"></span><span class="c" style="left:555px;width:52px"></span></div><div class="r" style="top:400px"><span class="c n" style="left:3px;width:86px">$3.00</span><span class="c n" style="left:89px;width:66px">$0.25</span><span class="c n" style="left:155px;width:85px">$0.10</span><span class="c n" style="left:240px;width:85px">$0.00</span><span class="c n" style="left:325px;width:88px">$26.35</span><span class="c n" style="left:413px;width:56px"></span><span class="c" style="left:469px;width:86px"></span><span class="c" style="left:555px;width:52px"></span></div><div class="r alt" style="top:425px"><span class="c n" style="left:3px;width:86px">$3.00</span><span class="c n" style="left:89px;width:66px">$0.25</span><span class="c n" style="left:155px;width:85px">$0.10</span><span class="c n" style="left:240px;width:85px">$0.00</span><span class="c n" style="left:325px;width:88px">$3.35</span><span class="c n" style="left:413px;width:56px">$10.00</span><span class="c" style="left:469px;width:86px"></span><span class="c" style="left:555px;width:52px">S</span></div><div class="r" style="top:450px"><span class="c n" style="left:3px;width:86px">$3.00</span><span class="c n" style="left:89px;width:66px">$0.25</span><span class="c n" style="left:155px;width:85px">$0.10</span><span class="c n" style="left:240px;width:85px">$0.00</span><span class="c n" style="left:325px;width:88px">$3.35</span><span class="c n" style="left:413px;width:56px">$5.00</span><span class="c" style="left:469px;width:86px"></span><span class="c" style="left:555px;width:52px"></span></div><div class="r alt" style="top:475px"><span class="c n" style="left:3px;width:86px">$3.00</span><span class="c n" style="left:89px;width:66px">$0.25</span><span class="c n" style="left:155px;width:85px">$0.10</span><span class="c n" style="left:240px;width:85px">$0.00</span><span class="c n" style="left:325px;width:88px">$3.35</span><span class="c n" style="left:413px;width:56px">$3.00</span><span class="c" style="left:469px;width:86px"></span><span class="c" style="left:555px;width:52px"></span></div><div class="r" style="top:500px"><span class="c n" style="left:3px;width:86px">$3.00</span><span class="c n" style="left:89px;width:66px">$0.25</span><span class="c n" style="left:155px;width:85px">$0.10</span><span class="c n" style="left:240px;width:85px">$0.00</span><span class="c n" style="left:325px;width:88px">$3.35</span><span class="c n" style="left:413px;width:56px"></span><span class="c" style="left:469px;width:86px"></span><span class="c" style="left:555px;width:52px"></span></div><div class="r alt" style="top:525px"><span class="c n" style="left:3px;width:86px">$3.00</span><span class="c n" style="left:89px;width:66px">$0.25</span><span class="c n" style="left:155px;width:85px">$0.10</span><span class="c n" style="left:240px;width:85px">$0.00</span><span class="c n" style="left:325px;width:88px">$3.35</span><span class="c n" style="left:413px;width:56px"></span><span class="c" style="left:469px;width:86px"></span><span class="c" style="left:555px;width:52px"></span></div><div class="r" style="top:550px"><span class="c n" style="left:3px;width:86px">$3.00</span><span class="c n" style="left:89px;width:66px">$0.25</span><span class="c n" style="left:155px;width:85px">$0.10</span><span class="c n" style="left:240px;width:85px">$0.00</span><span class="c n" style="left:325px;width:88px">$3.35</span><span class="c n" style="left:413px;width:56px"></span><span class="c" style="left:469px;width:86px"></span><span class="c" style="left:555px;width:52px"></span></div><div class="r alt" style="top:575px"><span class="c n" style="left:3px;width:86px">$3.00</span><span class="c n" style="left:89px;width:66px">$0.25</span><span class="c n" style="left:155px;width:85px">$0.10</span><span class="c n" style="left:240px;width:85px">$0.00</span><span class="c n" style="left:325px;width:88px">$3.35</span><span class="c n" style="left:413px;width:56px">$6.00</span><span class="c" style="left:469px;width:86px"></span><span class="c" style="left:555px;width:52px">S</span></div><div class="r" style="top:600px"><span class="c n" style="left:3px;width:86px">$3.00</span><span class="c n" style="left:89px;width:66px">$0.25</span><span class="c n" style="left:155px;width:85px">$0.10</span><span class="c n" style="left:240px;width:85px">$0.00</span><span class="c n" style="left:325px;width:88px">$3.35</span><span class="c n" style="left:413px;width:56px">$4.00</span><span class="c" style="left:469px;width:86px"></span><span class="c" style="left:555px;width:52px"></span></div><div class="r alt" style="top:625px"><span class="c n" style="left:3px;width:86px">$3.00</span><span class="c n" style="left:89px;width:66px">$0.25</span><span class="c n" style="left:155px;width:85px">$0.10</span><span class="c n" style="left:240px;width:85px">$0.00</span><span class="c n" style="left:325px;width:88px">$3.35</span><span class="c n" style="left:413px;width:56px">$8.00</span><span class="c" style="left:469px;width:86px"></span><span class="c" style="left:555px;width:52px"></span></div><div class="r" style="top:650px"><span class="c n" style="left:3px;width:86px">$3.00</span><span class="c n" style="left:89px;width:66px">$0.25</span><span class="c n" style="left:155px;width:85px">$0.10</span><span class="c n" style="left:240px;width:85px">$0.00</span><span class="c n" style="left:325px;width:88px">$3.35</span><span class="c n" style="left:413px;width:56px">$1.00</span><span class="c" style="left:469px;width:86px"></span><span class="c" style="left:555px;width:52px"></span></div><div class="r alt" style="top:675px"><span class="c n" style="left:3px;width:86px">$3.00</span><span class="c n" style="left:89px;width:66px">$0.25</span><span class="c n" style="left:155px;width:85px">$0.10</span><span class="c n" style="left:240px;width:85px">$0.00</span><span class="c n" style="left:325px;width:88px">$3.35</span><span class="c n" style="left:413px;width:56px"></span><span class="c" style="left:469px;width:86px"></span><span class="c" style="left:555px;width:52px"></span></div><div class="r" style="top:700px"><span class="c n" style="left:3px;width:86px">$3.00</span><span class="c n" style="left:89px;width:66px">$0.25</span><span class="c n" style="left:155px;width:85px">$0.10</span><span class="c n" style="left:240px;width:85px">$0.00</span><span class="c n" style="left:325px;width:88px">$3.35</span><span class="c n" style="left:413px;width:56px"></span><span class="c" style="left:469px;width:86px"></span><span class="c" style="left:555px;width:52px"></span></div></div><div class="vsb"><div class="vthumb"></div><i class="ua"></i><i class="da"></i></div>
<div class="hsb"><div class="hthumb"></div><i class="la"></i><i class="ra"></i></div>
<span class="foot" style="left:844px">Total Rows 128</span><span class="foot" style="left:953px">Average 0.84</span><span class="foot" style="left:1047px">Count 4</span><span class="foot" style="left:1109px">Min 0</span><span class="foot" style="left:1157px">Max 3</span><span class="foot" style="left:1208px">Sum 3.35</span>
</body></html>
